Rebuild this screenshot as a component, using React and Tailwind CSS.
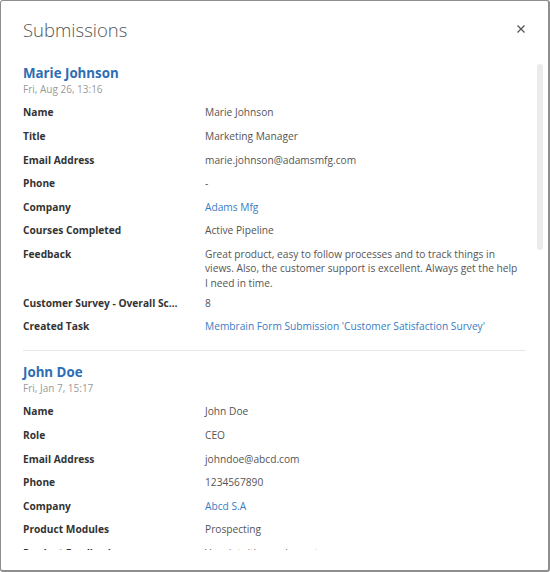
import React from 'react';

const submissions = [
    {
        id: 1,
        name: 'Marie Johnson',
        date: 'Fri, Aug 26, 13:16',
        fields: [
            { label: 'Name', value: 'Marie Johnson' },
            { label: 'Title', value: 'Marketing Manager' },
            { label: 'Email Address', value: 'marie.johnson@adamsmfg.com' },
            { label: 'Phone', value: '-' },
            { label: 'Company', value: 'Adams Mfg', link: true },
            { label: 'Courses Completed', value: 'Active Pipeline' },
            {
                label: 'Feedback',
                value: 'Great product, easy to follow processes and to track things in views. Also, the customer support is excellent. Always get the help I need in time.',
            },
            { label: 'Customer Survey - Overall Score', value: '8' },
            { label: 'Created Task', value: "Membrain Form Submission 'Customer Satisfaction Survey'", link: true },
        ],
    },
    {
        id: 2,
        name: 'John Doe',
        date: 'Fri, Jan 7, 15:17',
        fields: [
            { label: 'Name', value: 'John Doe' },
            { label: 'Role', value: 'CEO' },
            { label: 'Email Address', value: 'johndoe@abcd.com' },
            { label: 'Phone', value: '1234567890' },
            { label: 'Company', value: 'Abcd S.A', link: true },
            { label: 'Product Modules', value: 'Prospecting' },
            { label: 'Product Feedback', value: 'Very intuitive and easy to use.' },
            { label: 'Customer Survey - Overall Score', value: '9' },
        ],
    },
];

const Submission = ({ item }) => (
    <div className="pt-[12px] pb-[10px] border-b border-[#e6e6e6]">
        <h2 className="text-[13.3px] leading-[18px] font-bold text-[#2d6db3]">{item.name}</h2>
        <p className="text-[10px] leading-[14px] text-[#9a9a9a]">{item.date}</p>
        <div className="mt-[6.6px]">
            {item.fields.map((field, index) => (
                <div key={index} className="flex min-h-[23.6px] py-[2.85px] text-[10.2px] leading-[14.3px]">
                    <div className="w-[156px] mr-[26px] shrink-0 truncate font-bold text-[#333333]">{field.label}</div>
                    <div className={field.link ? 'flex-1 pr-[5px] text-[#3a7cc3]' : 'flex-1 pr-[5px] text-[#555555]'}>
                        {field.value}
                    </div>
                </div>
            ))}
        </div>
    </div>
);

const App = () => {
    return (
        <div className="w-[550px] h-[572px] bg-white font-['Open_Sans',sans-serif]">
            <div className="w-full h-full flex flex-col bg-white border border-r-2 border-b-2 border-[#8e8e8e] rounded-[3px]">
                {/* Header */}
                <div className="h-[51px] shrink-0 flex items-start justify-between pl-[22px] pr-[23px] pt-[15px]">
                    <h1 className="text-[18.5px] leading-[28px] font-light text-[#555555]">Submissions</h1>
                    <button className="mt-[9px] text-[#555555]">
                        <svg width="8" height="8" viewBox="0 0 8 8" fill="none" stroke="currentColor" strokeWidth="1.3">
                            <path d="M0.5 0.5l7 7M7.5 0.5l-7 7" />
                        </svg>
                    </button>
                </div>

                {/* Scroll area */}
                <div className="relative h-[498px] shrink-0 overflow-hidden">
                    <div className="pl-[22px] pr-[22px]">
                        {submissions.map(item => (
                            <Submission key={item.id} item={item} />
                        ))}
                    </div>
                    <div className="absolute right-[5px] top-[12px] w-[6px] h-[186px] rounded-full bg-[#ebebeb]"></div>
                </div>
            </div>
        </div>
    );
};

export default App;
